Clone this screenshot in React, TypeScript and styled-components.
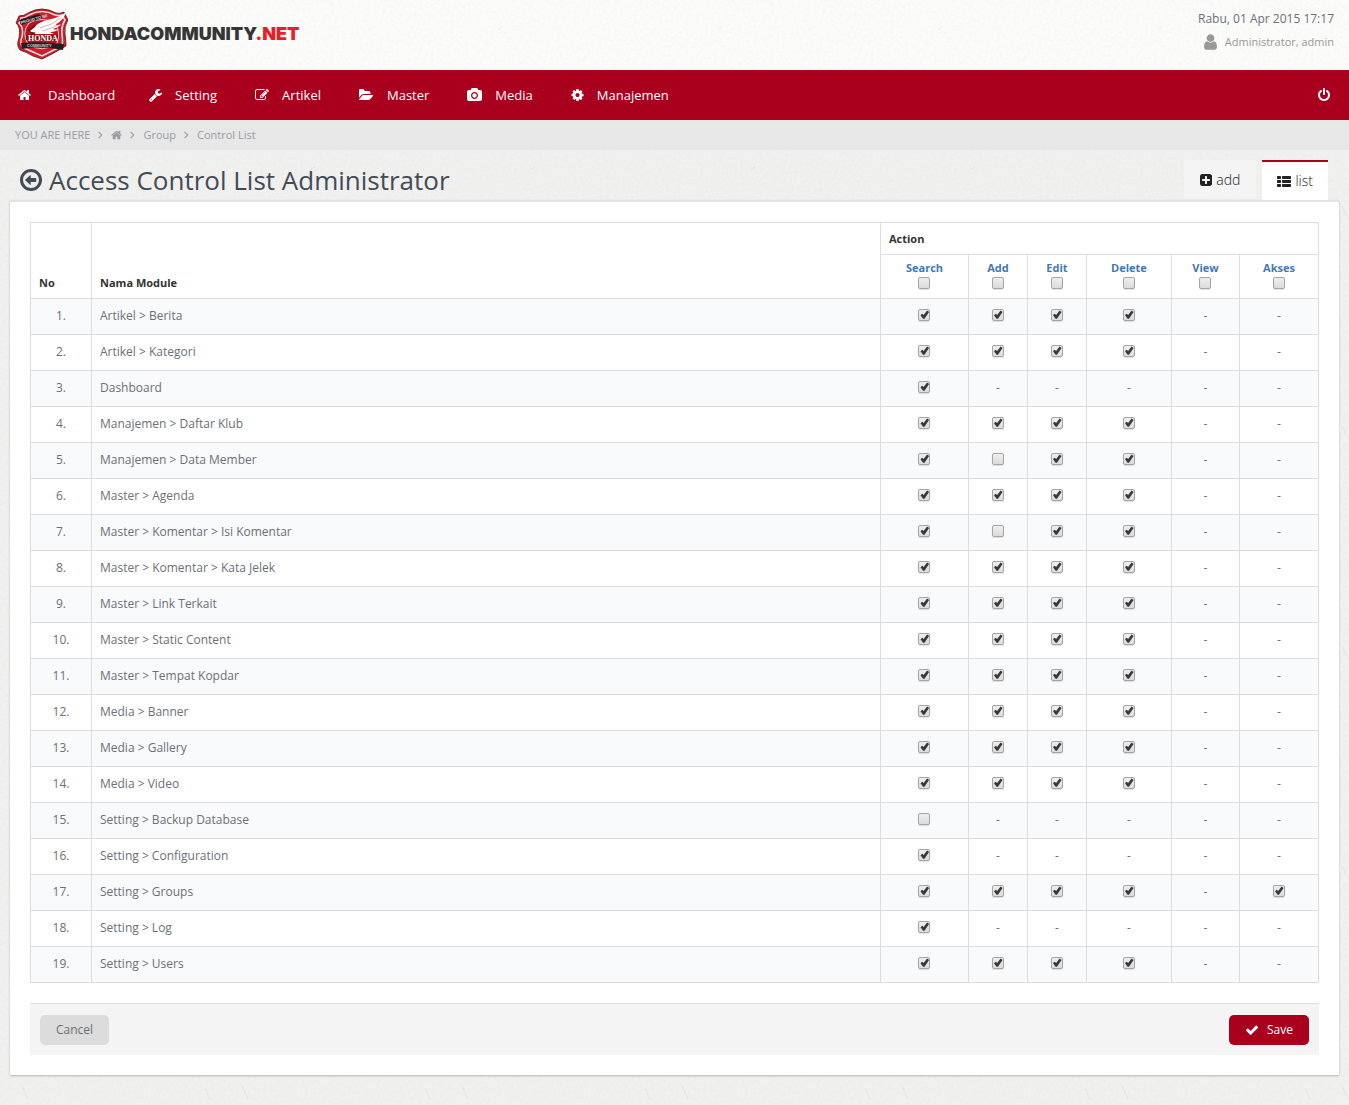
import React, { useState } from "react";
import styled, { createGlobalStyle } from "styled-components";

const red = "#a9001e";

const texture = `url("data:image/svg+xml,${encodeURIComponent(
  `<svg xmlns='http://www.w3.org/2000/svg' width='220' height='220'><filter id='n' x='0' y='0' width='100%' height='100%'><feTurbulence type='fractalNoise' baseFrequency='0.35' numOctaves='3' stitchTiles='stitch'/><feColorMatrix values='0 0 0 0 0.45  0 0 0 0 0.45  0 0 0 0 0.42  0 0 0 0.12 -0.04'/></filter><rect width='220' height='220' filter='url(#n)'/><g stroke='#000' stroke-opacity='.05' fill='none'><path d='M22 206l6 13M205 208l5 12M58 30l5-4M140 110l4 6M90 170l5-3'/></g></svg>`
)}")`;

const GlobalStyle = createGlobalStyle`
  *, *::before, *::after { box-sizing: border-box; }
  body {
    margin: 0;
    background: #f1f1f0 ${texture};
    color: #6b7078;
    font: 12px/20px "Open Sans", "Noto Sans", sans-serif;
  }
  a { color: inherit; text-decoration: none; }
  button, input { font: inherit; }
`;

const Header = styled.header`
  display: flex;
  justify-content: space-between;
  align-items: flex-start;
  height: 70px;
  padding: 8px 15px;
  background: #fcfcfb ${texture};
`;

const Brand = styled.a`
  display: flex;
  align-items: center;
  gap: 2px;
  color: #363636;
  font: 900 18px/52px Inter, "Liberation Sans", sans-serif;
  b { color: #ee1c25; font-weight: inherit; }
`;

const Account = styled.div`
  display: flex;
  flex-direction: column;
  align-items: flex-end;
  gap: 3px;
  time { font-size: 12px; line-height: 21px; }
`;

const User = styled.a`
  display: flex;
  align-items: center;
  gap: 8px;
  color: #999;
  font-size: 11px;
`;

const Nav = styled.nav`
  display: flex;
  justify-content: space-between;
  height: 50px;
  background: ${red};
  color: #fff;
  font-size: 13px;
`;

const Menu = styled.ul`
  display: flex;
  margin: 0;
  padding: 0;
  list-style: none;
`;

const MenuItem = styled.li`
  a {
    display: flex;
    align-items: center;
    gap: 13px;
    height: 50px;
    padding: 0 20px 0 18px;
  }
  &:first-child a { gap: 17px; padding-right: 16px; }
`;

const PowerButton = styled.button`
  display: flex;
  align-items: center;
  padding: 0 19px;
  border: 0;
  background: none;
  color: #fff;
`;

const Breadcrumb = styled.nav`
  display: flex;
  align-items: center;
  gap: 8px;
  height: 30px;
  padding: 0 15px;
  background: #e7e7e7;
  color: #999ca5;
  font-size: 11px;
  a { display: flex; align-items: center; }
`;

const TitleBar = styled.div`
  display: flex;
  justify-content: space-between;
  padding: 10px 20px 0;
`;

const Title = styled.h1`
  display: flex;
  align-items: center;
  gap: 7px;
  margin: 0;
  color: #444b54;
  font-size: 26px;
  font-weight: 400;
  line-height: 40px;
`;

const Tabs = styled.div`
  display: flex;
  align-items: flex-start;
  gap: 6px;
  padding-right: 1px;
`;

const Tab = styled.a<{ $active?: boolean }>`
  display: flex;
  align-items: center;
  gap: 4px;
  height: ${(p) => (p.$active ? 40 : 39)}px;
  padding: 0 ${(p) => (p.$active ? 15 : 16)}px;
  border-top: ${(p) => (p.$active ? `2px solid ${red}` : "0")};
  background: ${(p) => (p.$active ? "#fff" : "#f4f4f4")};
  color: #222;
  font-size: 14px;
  font-weight: 300;
`;

const Card = styled.main`
  margin: 0 10px 30px;
  padding: 20px;
  border-top: 2px solid #e2e2e2;
  background: #fff;
  box-shadow: 0 1px 2px rgba(0, 0, 0, 0.25);
`;

const Table = styled.table`
  width: 100%;
  table-layout: fixed;
  border-collapse: collapse;
  th, td { border: 1px solid #ddd; padding: 0 8px; }
  th {
    color: #333;
    font-size: 11px;
    font-weight: 700;
    text-align: left;
    vertical-align: bottom;
    padding-bottom: 5px;
  }
  td { height: 36px; padding-bottom: 2px; }
  tbody tr:nth-child(odd) { background: #f9fafc; }
`;

const Col = styled.col<{ $width?: number }>`
  width: ${(p) => (p.$width ? `${p.$width}px` : "auto")};
`;

const GroupRow = styled.tr`
  height: 32px;
`;

const ActionRow = styled.tr`
  height: 44px;
`;

const ActionHead = styled.label`
  display: flex;
  flex-direction: column;
  align-items: center;
  padding-bottom: 1px;
  color: #4279b3;
  line-height: 16px;
`;

const Cell = styled.td`
  text-align: center;
`;

const Check = styled.input`
  appearance: none;
  display: block;
  width: 12px;
  height: 12px;
  margin: 1px auto 3px;
  border: 1px solid #a5a5a5;
  border-radius: 2px;
  background: linear-gradient(#eee, #dcdcdc);
  box-shadow: 0 1px 1px rgba(0, 0, 0, 0.12);
  &:checked::before {
    content: "";
    display: block;
    width: 10px;
    height: 10px;
    background: #383838;
    clip-path: polygon(10% 58%, 27% 42%, 42% 56%, 76% 10%, 96% 26%, 50% 92%, 36% 92%);
  }
`;

const Actions = styled.footer`
  display: flex;
  justify-content: space-between;
  margin-top: 20px;
  padding: 11px 10px 10px;
  border-top: 1px solid #ddd;
  background: #f4f4f4;
`;

const Button = styled.button<{ $primary?: boolean }>`
  display: flex;
  align-items: center;
  gap: 8px;
  height: 30px;
  padding: 0 16px;
  border: 0;
  border-radius: 5px;
  background: ${(p) => (p.$primary ? red : "#dcdcdc")};
  color: ${(p) => (p.$primary ? "#fff" : "#6b7078")};
`;

const icons = {
  home: ["64 0 1664 1792", "M1472 992v480q0 26-19 45t-45 19h-384v-384h-256v384h-384q-26 0-45-19t-19-45v-480q0-1 .5-3t.5-3l575-474 575 474q1 2 1 6zm223-69l-62 74q-8 9-21 11h-3q-13 0-21-7l-692-577-692 577q-12 8-24 7-13-2-21-11l-62-74q-8-10-7-23.5t11-21.5l719-599q32-26 76-26t76 26l244 204v-195q0-14 9-23t23-9h192q14 0 23 9t9 23v408l219 182q10 8 11 21.5t-7 23.5z"],
  wrench: ["64 0 1664 1792", "M448 1472q0-26-19-45t-45-19-45 19-19 45 19 45 45 19 45-19 19-45zm644-420l-682 682q-37 37-90 37-52 0-91-37l-106-108q-38-36-38-90 0-53 38-91l681-681q39 98 114.5 173.5t173.5 114.5zm634-435q0 39-23 106-47 134-164.5 217.5t-258.5 83.5q-185 0-316.5-131.5t-131.5-316.5 131.5-316.5 316.5-131.5q58 0 121.5 16.5t107.5 46.5q16 11 16 28t-16 28l-293 169v224l193 107q5-3 79-48.5t135.5-81 70.5-35.5q15 0 23.5 10t8.5 25z"],
  edit: ["0 0 1792 1792", "M888 1184l116-116-152-152-116 116v56h96v96h56zm440-720q-16-16-33 1l-350 350q-17 17-1 33t33-1l350-350q17-17 1-33zm80 594v190q0 119-84.5 203.5t-203.5 84.5h-832q-119 0-203.5-84.5t-84.5-203.5v-832q0-119 84.5-203.5t203.5-84.5h832q63 0 117 25 15 7 18 23 3 17-9 29l-49 49q-14 14-32 8-23-6-45-6h-832q-66 0-113 47t-47 113v832q0 66 47 113t113 47h832q66 0 113-47t47-113v-126q0-13 9-22l64-64q15-15 35-7t20 29zm-96-738l288 288-672 672h-288v-288zm444 132l-92 92-288-288 92-92q28-28 68-28t68 28l152 152q28 28 28 68t-28 68z"],
  folder: ["0 0 1920 1792", "M1815 952q0 31-31 66l-336 396q-43 51-120.5 86.5t-143.5 35.5h-1088q-34 0-60.5-13t-26.5-43q0-31 31-66l336-396q43-51 120.5-86.5t143.5-35.5h1088q34 0 60.5 13t26.5 43zm-343-344v160h-832q-94 0-197 47.5t-164 119.5l-337 396-5 6q0-4-.5-12.5t-.5-12.5v-960q0-92 66-158t158-66h320q92 0 158 66t66 158v32h544q92 0 158 66t66 158z"],
  camera: ["0 0 1920 1792", "M960 672q119 0 203.5 84.5t84.5 203.5-84.5 203.5-203.5 84.5-203.5-84.5-84.5-203.5 84.5-203.5 203.5-84.5zm704-416q106 0 181 75t75 181v896q0 106-75 181t-181 75h-1408q-106 0-181-75t-75-181v-896q0-106 75-181t181-75h224l51-136q19-49 69.5-84.5t103.5-35.5h512q53 0 103.5 35.5t69.5 84.5l51 136h224zm-704 1152q185 0 316.5-131.5t131.5-316.5-131.5-316.5-316.5-131.5-316.5 131.5-131.5 316.5 131.5 316.5 316.5 131.5z"],
  cog: ["64 0 1664 1792", "M1152 896q0-106-75-181t-181-75-181 75-75 181 75 181 181 75 181-75 75-181zm512-109v222q0 12-8 23t-20 13l-185 28q-19 54-39 91 35 50 107 138 10 12 10 25t-9 23q-27 37-99 108t-94 71q-12 0-26-9l-138-108q-44 23-91 38-16 136-29 186-7 28-36 28h-222q-14 0-24.5-8.5t-11.5-21.5l-28-184q-49-16-90-37l-141 107q-10 9-25 9-14 0-25-11-126-114-165-168-7-10-7-23 0-12 8-23 15-21 51-66.5t54-70.5q-27-50-41-99l-183-27q-13-2-21-12.5t-8-23.5v-222q0-12 8-23t19-13l186-28q14-46 39-92-40-57-107-138-10-12-10-24 0-10 9-23 26-36 98.5-107.5t94.5-71.5q13 0 26 10l138 107q44-23 91-38 16-136 29-186 7-28 36-28h222q14 0 24.5 8.5t11.5 21.5l28 184q49 16 90 37l142-107q9-9 24-9 13 0 25 10 129 119 165 170 7 8 7 22 0 12-8 23-15 21-51 66.5t-54 70.5q26 50 41 98l183 28q13 2 21 12.5t8 23.5z"],
  power: ["128 0 1536 1792", "M1664 896q0 156-61 298t-164 245-245 164-298 61-298-61-245-164-164-245-61-298q0-182 80.5-343t226.5-270q43-32 95.5-25t83.5 50q32 42 24.5 94.5t-49.5 84.5q-98 74-151.5 181t-53.5 228q0 104 40.5 198.5t109.5 163.5 163.5 109.5 198.5 40.5 198.5-40.5 163.5-109.5 109.5-163.5 40.5-198.5q0-121-53.5-228t-151.5-181q-42-32-49.5-84.5t24.5-94.5q31-43 84-50t95 25q146 109 226.5 270t80.5 343zm-640-768v640q0 52-38 90t-90 38-90-38-38-90v-640q0-52 38-90t90-38 90 38 38 90z"],
  user: ["256 0 1280 1792", "M1536 1399q0 109-62.5 187t-150.5 78h-854q-88 0-150.5-78t-62.5-187q0-85 8.5-160.5t31.5-152 58.5-131 94-89 134.5-34.5q131 128 313 128t313-128q76 0 134.5 34.5t94 89 58.5 131 31.5 152 8.5 160.5zm-256-887q0 159-112.5 271.5t-271.5 112.5-271.5-112.5-112.5-271.5 112.5-271.5 271.5-112.5 271.5 112.5 112.5 271.5z"],
  check: ["0 0 1792 1792", "M1671 566q0 40-28 68l-724 724-136 136q-28 28-68 28t-68-28l-136-136-362-362q-28-28-28-68t28-68l136-136q28-28 68-28t68 28l294 295 656-657q28-28 68-28t68 28l136 136q28 28 28 68z"],
  plus: ["128 0 1536 1792", "M1408 960v-128q0-26-19-45t-45-19h-320v-320q0-26-19-45t-45-19h-128q-26 0-45 19t-19 45v320h-320q-26 0-45 19t-19 45v128q0 26 19 45t45 19h320v320q0 26 19 45t45 19h128q26 0 45-19t19-45v-320h320q26 0 45-19t19-45zm256-544v960q0 119-84.5 203.5t-203.5 84.5h-960q-119 0-203.5-84.5t-84.5-203.5v-960q0-119 84.5-203.5t203.5-84.5h960q119 0 203.5 84.5t84.5 203.5z"],
  list: ["0 0 14 14", "M.7 2h2.6q.7 0 .7.7v1.6q0 .7-.7.7H.7Q0 5 0 4.300V2.700Q0 2 .7 2zM.7 6h2.600q.7 0 .7.7v1.600q0 .7-.7.7H.7Q0 9 0 8.300V6.700Q0 6 .7 6zM.7 10h2.600q.7 0 .7.7v1.600q0 .7-.7.7H.7Q0 13 0 12.300v-1.600Q0 10 .7 10zM5.700 2h7.600q.7 0 .7.7v1.600q0 .7-.7.7H5.700Q5 5 5 4.300V2.700Q5 2 5.700 2zM5.700 6h7.600q.7 0 .7.7v1.600q0 .7-.7.7H5.700Q5 9 5 8.300V6.700Q5 6 5.700 6zM5.700 10h7.600q.7 0 .7.7v1.600q0 .7-.7.7H5.700Q5 13 5 12.300v-1.600Q5 10 5.700 10z"],
  back: ["0 0 22 26", "M11 2a11 11 0 1 0 0 22a11 11 0 0 0 0-22zm0 3a8 8 0 1 1 0 16a8 8 0 0 1 0-16zM5.400 12.600l4.700-4.300q.6-.5.600.3v2.500h5q.5 0 .5.5v2.800q0 .5-.5.5h-5v2.500q0 .8-.6.3l-4.700-4.300q-.4-.4 0-.8z"],
  angle: ["0 0 5 8", "M1 .5l3.500 3.500-3.500 3.500-.8-.8 2.700-2.700-2.700-2.700z"],
} as const;

type IconName = keyof typeof icons;

function Icon({ name, size = 14 }: { name: IconName; size?: number }) {
  const [viewBox, d] = icons[name];
  const [, , w, h] = viewBox.split(" ").map(Number);
  return (
    <svg width={Math.round((size * w) / h)} height={size} viewBox={viewBox} fill="currentColor" aria-hidden="true">
      <path d={d} />
    </svg>
  );
}

function Logo() {
  return (
    <svg width="53" height="52" viewBox="0 0 53 52" aria-hidden="true">
      <path d="M13 5Q27-3 41 5Q45 6 49 4L53 12Q49 18 50 26Q51 33 51 38Q44 42 37 46L27 51L18 48Q11 44 5 42Q1 38 4 30Q6 19 1 15L4 8Q9 8 13 5z" fill="#c8202c" stroke="#5b171b" strokeWidth=".8" />
      <path d="M14 7Q27 0 40 7Q44 8 47 7L50 12Q46 18 47 26Q48 34 47 38L27 48L9 40Q4 36 7 29Q9 20 4 15L6 10Q10 10 14 7z" fill="none" stroke="#f9dede" strokeWidth="1.500" />
      <path d="M14 15Q27 8 40 15Q46 25 42 35Q27 46 13 36Q6 25 14 15z" fill="#b3141f" stroke="#f3c6c6" strokeWidth="1" />
      <path d="M12 22l8-5 4 4-6 5zM11 27l8-2 2 2h22l-1 5H11z" fill="#7a0f17" />
      <path d="M4 12L24 6L28 10L6 17z" fill="#231f20" />
      <path d="M51 4Q46 9 32 12Q22 15 20 19L15 23Q17 25 21 24Q19 25 20 26H39Q36 25 35 24Q41 24 44 21Q40 22 38 21Q44 19 46 16Q42 18 40 17Q49 12 51 4z" fill="#fff" />
      <path d="M25 20Q37 17 46 10M27 23Q36 21 43 17" fill="none" stroke="#dd8b90" strokeWidth=".7" />
      <path d="M6 35Q25 33 49 36L48 42Q26 37 7 41z" fill="#231f20" />
      <text x="6" y="16" transform="rotate(-15 6 16)" fontFamily="Liberation Sans" fontSize="4" fill="#ddd">PROUD TO BE</text>
      <text x="13" y="33" fontFamily="Liberation Serif" fontWeight="700" fontSize="8" fill="#fff">HONDA</text>
      <text x="12" y="39" fontFamily="Liberation Sans" fontSize="4" fill="#ccc">COMMUNITY</text>
    </svg>
  );
}

const menu: [IconName, string][] = [
  ["home", "Dashboard"],
  ["wrench", "Setting"],
  ["edit", "Artikel"],
  ["folder", "Master"],
  ["camera", "Media"],
  ["cog", "Manajemen"],
];

const actions = ["Search", "Add", "Edit", "Delete", "View", "Akses"];
const columnWidths = [88, 59, 59, 85, 68, 79];

// One letter per action: x = granted, o = not granted, - = not available.
const modules: [string, string][] = [
  ["Artikel > Berita", "xxxx--"],
  ["Artikel > Kategori", "xxxx--"],
  ["Dashboard", "x-----"],
  ["Manajemen > Daftar Klub", "xxxx--"],
  ["Manajemen > Data Member", "xoxx--"],
  ["Master > Agenda", "xxxx--"],
  ["Master > Komentar > Isi Komentar", "xoxx--"],
  ["Master > Komentar > Kata Jelek", "xxxx--"],
  ["Master > Link Terkait", "xxxx--"],
  ["Master > Static Content", "xxxx--"],
  ["Master > Tempat Kopdar", "xxxx--"],
  ["Media > Banner", "xxxx--"],
  ["Media > Gallery", "xxxx--"],
  ["Media > Video", "xxxx--"],
  ["Setting > Backup Database", "o-----"],
  ["Setting > Configuration", "x-----"],
  ["Setting > Groups", "xxxx-x"],
  ["Setting > Log", "x-----"],
  ["Setting > Users", "xxxx--"],
];

export default function App() {
  const [rights, setRights] = useState(() => modules.map(([, r]) => r.split("")));
  const toggle = (row: number, col: number) =>
    setRights((all) =>
      all.map((r, i) => (i === row ? r.map((v, j) => (j === col ? (v === "x" ? "o" : "x") : v)) : r))
    );
  const setColumn = (col: number, on: boolean) =>
    setRights((all) => all.map((r) => r.map((v, j) => (j === col && v !== "-" ? (on ? "x" : "o") : v))));

  return (
    <>
      <GlobalStyle />
      <Header>
        <Brand href="#">
          <Logo />
          <span>HONDACOMMUNITY<b>.NET</b></span>
        </Brand>
        <Account>
          <time dateTime="2015-04-01T17:17">Rabu, 01 Apr 2015 17:17</time>
          <User href="#"><Icon name="user" size={18} />Administrator, admin</User>
        </Account>
      </Header>
      <Nav>
        <Menu>
          {menu.map(([icon, label]) => (
            <MenuItem key={label}><a href="#"><Icon name={icon} />{label}</a></MenuItem>
          ))}
        </Menu>
        <PowerButton type="button" aria-label="Logout"><Icon name="power" /></PowerButton>
      </Nav>
      <Breadcrumb>
        <span>YOU ARE HERE</span>
        <Icon name="angle" size={8} />
        <a href="#" aria-label="Home"><Icon name="home" size={12} /></a>
        <Icon name="angle" size={8} />
        <a href="#">Group</a>
        <Icon name="angle" size={8} />
        <a href="#">Control List</a>
      </Breadcrumb>
      <TitleBar>
        <Title><Icon name="back" size={26} />Access Control List Administrator</Title>
        <Tabs>
          <Tab href="#"><Icon name="plus" />add</Tab>
          <Tab href="#" $active><Icon name="list" />list</Tab>
        </Tabs>
      </TitleBar>
      <Card>
        <Table>
          <colgroup>
            <Col $width={61} />
            <Col />
            {columnWidths.map((w, i) => <Col key={i} $width={w} />)}
          </colgroup>
          <thead>
            <GroupRow>
              <th rowSpan={2}>No</th>
              <th rowSpan={2}>Nama Module</th>
              <th colSpan={6}>Action</th>
            </GroupRow>
            <ActionRow>
              {actions.map((a, col) => (
                <th key={a}>
                  <ActionHead>
                    {a}
                    <Check type="checkbox" onChange={(e) => setColumn(col, e.target.checked)} />
                  </ActionHead>
                </th>
              ))}
            </ActionRow>
          </thead>
          <tbody>
            {modules.map(([name], row) => (
              <tr key={name}>
                <Cell>{row + 1}.</Cell>
                <td>{name}</td>
                {rights[row].map((v, col) => (
                  <Cell key={col}>
                    {v === "-" ? "-" : (
                      <Check
                        type="checkbox"
                        aria-label={`${actions[col]} ${name}`}
                        checked={v === "x"}
                        onChange={() => toggle(row, col)}
                      />
                    )}
                  </Cell>
                ))}
              </tr>
            ))}
          </tbody>
        </Table>
        <Actions>
          <Button type="button">Cancel</Button>
          <Button type="submit" $primary><Icon name="check" />Save</Button>
        </Actions>
      </Card>
    </>
  );
}
